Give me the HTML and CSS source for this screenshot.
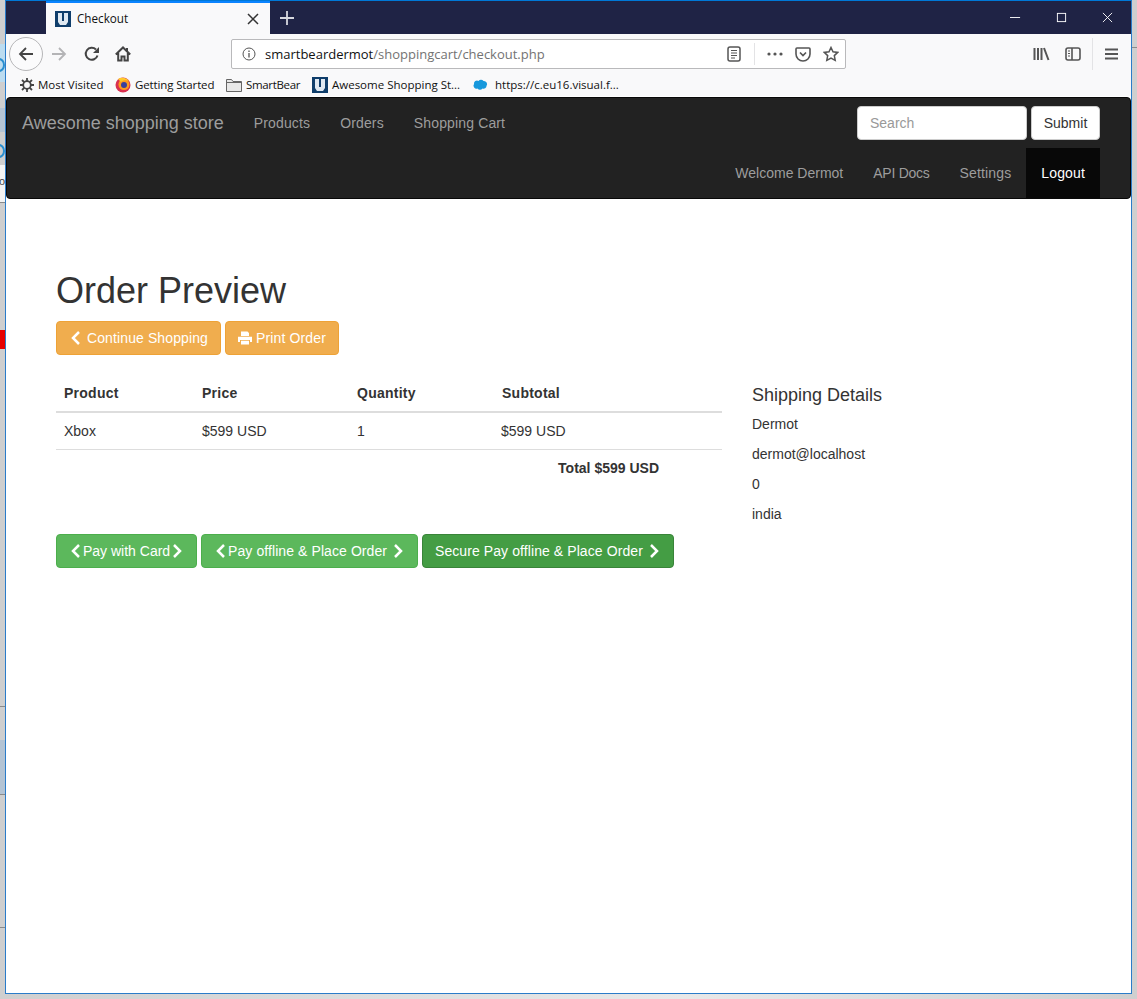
FILE: index.html
```html
<!DOCTYPE html>
<html lang="en">
<head>
  <meta charset="UTF-8" />
  <title>Checkout</title>
  <link rel="stylesheet" href="styles.css">
</head>
<body>
  <div class="desktop">
    <div class="strip strip-a"></div>
    <div class="strip strip-b"></div>
    <div class="strip strip-red"></div>
    <div class="strip strip-c"></div>
    <div class="strip strip-d"></div>
    <div class="strip-ring ring-a"></div>
    <div class="strip-ring ring-b"></div>
    <div class="strip-char">o</div>
    <div class="strip-line line-a"></div>
    <div class="strip-line line-b"></div>
    <div class="strip-line line-c"></div>
    <div class="strip-line line-d"></div>
    <div class="strip-line line-right"></div>
  </div>

  <div class="window">
    <div class="titlebar">
      <div class="tab">
        <svg class="favicon" viewBox="0 0 16 16"><rect width="16" height="16" fill="#0f3e6b"/><path d="M3 2h4v8h2V2h4v9l-2 3H5l-2-3z" fill="#dfe9f2"/></svg>
        <span class="tab-title">Checkout</span>
        <svg class="tab-close" viewBox="0 0 12 12"><path d="M1 1l10 10M11 1L1 11" stroke="#333" stroke-width="1.500" fill="none"/></svg>
      </div>
      <svg class="new-tab" viewBox="0 0 14 14"><path d="M7 0v14M0 7h14" stroke="#d6d7de" stroke-width="1.800" fill="none"/></svg>
      <div class="win-controls">
        <svg viewBox="0 0 12 12"><path d="M0 6h11" stroke="#fff" fill="none"/></svg>
        <svg viewBox="0 0 12 12"><rect x="1.500" y="1.500" width="9" height="9" stroke="#fff" fill="none"/></svg>
        <svg viewBox="0 0 12 12"><path d="M1 1l10 10M11 1L1 11" stroke="#fff" fill="none"/></svg>
      </div>
    </div>

    <div class="toolbar">
      <div class="back">
        <svg viewBox="0 0 16 16"><path d="M15 8H2M8 2L2 8l6 6" stroke="#444" stroke-width="1.800" fill="none"/></svg>
      </div>
      <svg class="tool forward" viewBox="0 0 16 16"><path d="M1 8h13M8 2l6 6-6 6" stroke="#b4b4b6" stroke-width="1.800" fill="none"/></svg>
      <svg class="tool reload" viewBox="0 0 16 16"><path d="M13.500 9.500A6 6 0 1 1 12 3.500" stroke="#444" stroke-width="2" fill="none"/><path d="M15 1v6H9z" fill="#444"/></svg>
      <svg class="tool home" viewBox="0 0 16 16"><path d="M.800 8.500L8 1.500l7.200 7M3.200 7v7.500h3.300v-4h3v4h3.300V7M12 2v3" stroke="#444" stroke-width="2" fill="none"/></svg>
      <div class="urlbar">
        <svg class="info" viewBox="0 0 14 14"><circle cx="7" cy="7" r="6" stroke="#555" fill="none"/><path d="M7 6v4.500M7 3.500v1.500" stroke="#555" stroke-width="1.300" fill="none"/></svg>
        <span class="url"><span class="url-host">smartbeardermot</span>/shoppingcart/checkout.php</span>
        <svg class="url-icon reader" viewBox="0 0 14 16"><rect x="1" y="1" width="12" height="14" rx="2" stroke="#555" stroke-width="1.500" fill="none"/><path d="M4 4.500h6M4 7h6M4 9.500h6M4 12h4" stroke="#555" fill="none"/></svg>
        <span class="url-sep"></span>
        <svg class="url-icon dots" viewBox="0 0 16 4"><circle cx="2" cy="2" r="1.600" fill="#555"/><circle cx="8" cy="2" r="1.600" fill="#555"/><circle cx="14" cy="2" r="1.600" fill="#555"/></svg>
        <svg class="url-icon pocket" viewBox="0 0 16 16"><path d="M2 2h12a1 1 0 0 1 1 1v5a7 7 0 0 1-14 0V3a1 1 0 0 1 1-1z" stroke="#555" stroke-width="1.600" fill="none"/><path d="M5 6.500l3 3 3-3" stroke="#555" stroke-width="1.700" fill="none"/></svg>
        <svg class="url-icon star" viewBox="0 0 16 16"><path d="M8 1.500l2 4.300 4.700.6-3.400 3.200.9 4.700L8 12l-4.200 2.300.9-4.700L1.300 6.400 6 5.800z" stroke="#555" stroke-width="1.500" fill="none"/></svg>
      </div>
      <svg class="tool library" viewBox="0 0 17 16"><path d="M1.500 2v12M5 2v12M8.500 2v12M11 2l4.500 12" stroke="#555" stroke-width="2" fill="none"/></svg>
      <svg class="tool sidebar" viewBox="0 0 16 16"><rect x="1" y="2" width="14" height="12" rx="2" stroke="#555" stroke-width="1.600" fill="none"/><path d="M7 2v12" stroke="#555" stroke-width="1.600"/><path d="M3 5h2M3 7.500h2M3 10h2" stroke="#555" fill="none"/></svg>
      <span class="tool-sep"></span>
      <svg class="tool menu" viewBox="0 0 13 12"><path d="M0 1.500h13M0 6h13M0 10.500h13" stroke="#555" stroke-width="1.800" fill="none"/></svg>
    </div>

    <div class="bookmarks">
      <span class="bookmark">
        <svg viewBox="0 0 14 14"><circle cx="7" cy="7" r="3.800" stroke="#444" stroke-width="1.800" fill="none"/><path d="M7 0v3M7 11v3M0 7h3M11 7h3M2 2l2.200 2.200M9.800 9.800L12 12M12 2L9.800 4.200M4.200 9.800L2 12" stroke="#444" stroke-width="1.800" fill="none"/></svg>
        Most Visited
      </span>
      <span class="bookmark">
        <svg class="wide" viewBox="0 0 16 16"><circle cx="8" cy="8" r="7.500" fill="#d9304f"/><circle cx="9" cy="7.500" r="5.500" fill="#ff9a1f"/><circle cx="9" cy="8" r="3" fill="#3a3f9e"/><path d="M3 2c3-2 8-2 11 2-3-1-6-1-8 1z" fill="#ffc92c"/></svg>
        Getting Started
      </span>
      <span class="bookmark">
        <svg class="wide" viewBox="0 0 16 14"><path d="M.5 13.500V1.500h5l1.500 2h8.500v10z" fill="#e8e8e8" stroke="#666"/><path d="M.5 4.500h15" stroke="#666"/></svg>
        SmartBear
      </span>
      <span class="bookmark">
        <svg class="wide" viewBox="0 0 16 16"><rect width="16" height="16" fill="#0f3e6b"/><path d="M3 2h4v8h2V2h4v9l-2 3H5l-2-3z" fill="#dfe9f2"/></svg>
        Awesome Shopping St...
      </span>
      <span class="bookmark">
        <svg class="wide cloud" viewBox="0 0 16 12"><path d="M6.500 2a3 3 0 0 1 5 0 3.200 3.200 0 0 1 3 5 2.800 2.800 0 0 1-4 2.500 3 3 0 0 1-5 0A3 3 0 0 1 2 5a3 3 0 0 1 4.500-3z" fill="#1798dc"/></svg>
        https://c.eu16.visual.f...
      </span>
    </div>

    <nav class="navbar">
      <div class="navbar-row">
        <div class="navbar-left">
          <a class="brand">Awesome shopping store</a>
          <a class="nav-link loose">Products</a>
          <a class="nav-link loose">Orders</a>
          <a class="nav-link loose">Shopping Cart</a>
        </div>
        <form class="search">
          <input class="search-input" type="text" placeholder="Search" />
          <button class="search-btn" type="button">Submit</button>
        </form>
      </div>
      <div class="navbar-row navbar-row-right">
        <a class="nav-link">Welcome Dermot</a>
        <a class="nav-link tight">API Docs</a>
        <a class="nav-link loose">Settings</a>
        <a class="nav-link loose active">Logout</a>
      </div>
    </nav>

    <main class="content">
      <h1>Order Preview</h1>
      <div class="actions">
        <a class="btn btn-warning"><svg class="glyph" viewBox="0 0 14 14"><path d="M10 1L4 7l6 6" /></svg> Continue Shopping</a>
        <a class="btn btn-warning"><svg class="glyph glyph-fill" viewBox="0 0 14 14"><path d="M3 .5h6.500L11 2v3H3zM0 5.800h14V11h-2V9H2v2H0zM3 9.800h8v3.700H3z" /></svg> Print Order</a>
      </div>

      <div class="order">
        <table class="cart">
          <colgroup>
            <col class="col-product"><col class="col-price"><col class="col-qty"><col>
          </colgroup>
          <thead>
            <tr><th>Product</th><th>Price</th><th>Quantity</th><th>Subtotal</th></tr>
          </thead>
          <tbody>
            <tr><td>Xbox</td><td>$599 USD</td><td>1</td><td>$599 USD</td></tr>
            <tr class="total-row"><td colspan="4"><strong>Total $599 USD</strong></td></tr>
          </tbody>
        </table>
        <div class="shipping">
          <h4>Shipping Details</h4>
          <p>Dermot</p>
          <p>dermot@localhost</p>
          <p>0</p>
          <p>india</p>
        </div>
      </div>

      <div class="pay">
        <a class="btn btn-success"><svg class="glyph" viewBox="0 0 14 14"><path d="M10 1L4 7l6 6" /></svg>Pay with Card<svg class="glyph" viewBox="0 0 14 14"><path d="M4 1l6 6-6 6" /></svg></a>
        <a class="btn btn-success btn-wide"><svg class="glyph" viewBox="0 0 14 14"><path d="M10 1L4 7l6 6" /></svg>Pay offline &amp; Place Order <svg class="glyph" viewBox="0 0 14 14"><path d="M4 1l6 6-6 6" /></svg></a>
        <a class="btn btn-success btn-wide btn-dark">Secure Pay offline &amp; Place Order <svg class="glyph" viewBox="0 0 14 14"><path d="M4 1l6 6-6 6" /></svg></a>
      </div>
    </main>
  </div>
</body>
</html>
```

FILE: styles.css
```css
* {
  box-sizing: border-box;
}
body {
  margin: 0;
  height: 999px;
  overflow: hidden;
  position: relative;
  background: linear-gradient(90deg, #cfcfcf, #e8e8e8 60%, #cfcfcf);
  font-family: "Liberation Sans", Arial, sans-serif;
  font-size: 14px;
  line-height: 20px;
  color: #333;
}

/* bits of other windows showing round the browser */
.desktop .strip, .desktop .strip-line {
  position: absolute;
  left: 0;
  width: 5px;
}
.strip-a { top: 44px; height: 38px; background: #bcdcf0; }
.strip-b { top: 108px; height: 24px; background: #b4c4d4; }
.strip-red { top: 330px; height: 19px; background: #e60000; }
.strip-c { top: 740px; height: 55px; background: #b4c4d4; }
.strip-d { top: 165px; height: 37px; background: #f4f4f4; }
.strip-line { height: 1px; background: #8a8a8a; }
.line-a { top: 706px; }
.line-b { top: 794px; }
.line-c { top: 927px; }
.line-d { top: 202px; }
.desktop .line-right { left: 1132px; top: 47px; }
.strip-ring {
  position: absolute;
  left: -7px;
  width: 12px;
  height: 14px;
  border: 2px solid #2a8fd0;
  border-radius: 50%;
}
.ring-a { top: 58px; }
.ring-b { top: 144px; }
.strip-char {
  position: absolute;
  left: -1px;
  top: 171px;
  font-size: 11px;
  color: #444;
}

.window {
  position: relative;
  margin-left: 5px;
  width: 1127px;
  height: 994px;
  background: #fff;
  border: 1px solid #2b7cc9;
  border-top-color: #0078d7;
  display: flex;
  flex-direction: column;
}

/* browser chrome */
.titlebar {
  height: 33px;
  background: #1f2345;
  display: flex;
  align-items: center;
  padding-left: 40px;
  flex-shrink: 0;
}
.tab {
  width: 224px;
  height: 33px;
  background: #f9f9fa;
  border-top: 2px solid #0a84ff;
  display: flex;
  align-items: center;
  padding: 0 11px 0 9px;
  font-family: "Open Sans", sans-serif;
  font-size: 11.700px;
  color: #111;
}
.favicon {
  width: 16px;
  height: 16px;
}
.tab-title {
  margin-left: 6px;
  padding-bottom: 2px;
  flex: 1;
}
.tab-close {
  width: 12px;
  height: 12px;
}
.new-tab {
  width: 14px;
  height: 14px;
  margin-left: 10px;
}
.win-controls {
  margin-left: auto;
  display: flex;
  gap: 35px;
  padding-right: 18px;
}
.win-controls svg {
  width: 11px;
  height: 11px;
}

.toolbar {
  height: 36px;
  background: #f9f9fa;
  display: flex;
  align-items: center;
  flex-shrink: 0;
  font-family: "Open Sans", sans-serif;
}
.back {
  width: 34px;
  height: 34px;
  margin: 4px 0 0 3px;
  border: 1px solid #b6b6b8;
  border-radius: 50%;
  background: #fbfbfc;
  display: flex;
  align-items: center;
  justify-content: center;
  position: relative;
  z-index: 1;
}
.back svg {
  width: 16px;
  height: 16px;
}
.tool {
  width: 16px;
  height: 16px;
  margin-top: 4px;
  flex-shrink: 0;
}
.forward { margin-left: 8px; }
.reload { margin-left: 17px; }
.home { margin-left: 15px; }
.urlbar {
  width: 615px;
  height: 30px;
  margin: 4px 0 0 100px;
  background: #fff;
  border: 1px solid #b9b9bb;
  border-radius: 2px;
  display: flex;
  align-items: center;
  padding-left: 10px;
}
.info {
  width: 14px;
  height: 14px;
}
.url {
  margin-left: 9px;
  font-size: 13px;
  color: #737373;
  flex: 1;
  white-space: nowrap;
}
.url-host {
  color: #111;
}
.url-icon {
  flex-shrink: 0;
}
.reader {
  width: 14px;
  height: 16px;
}
.url-sep {
  width: 1px;
  height: 22px;
  background: #e3e3e5;
  margin: 0 12px 0 13px;
}
.dots {
  width: 16px;
  height: 4px;
}
.pocket {
  width: 16px;
  height: 16px;
  margin-left: 12px;
}
.star {
  width: 16px;
  height: 16px;
  margin: 0 6px 0 12px;
}
.library {
  width: 17px;
  margin-left: 187px;
}
.sidebar {
  margin-left: 15px;
}
.tool-sep {
  width: 1px;
  height: 32px;
  background: #e3e3e5;
  margin: 4px 0 0 11px;
}
.menu {
  width: 13px;
  height: 12px;
  margin-left: 12px;
}

.bookmarks {
  height: 26px;
  background: #f9f9fa;
  display: flex;
  align-items: center;
  padding: 4px 0 0 14px;
  flex-shrink: 0;
  font-family: "Open Sans", sans-serif;
  font-size: 11.500px;
  color: #111;
}
.bookmark {
  display: flex;
  align-items: center;
  gap: 4px;
  white-space: nowrap;
}
.bookmark:nth-child(1) { width: 95px; }
.bookmark:nth-child(2) { width: 111px; letter-spacing: -.13px; }
.bookmark:nth-child(3) { width: 86px; letter-spacing: -.33px; }
.bookmark:nth-child(4) { width: 160px; }
.bookmark svg {
  width: 14px;
  height: 14px;
}
.bookmark svg.wide {
  width: 16px;
  height: 16px;
}
.bookmark svg.cloud {
  margin-right: 3px;
}

/* site navbar */
.navbar {
  margin-top: 1px;
  height: 102px;
  flex-shrink: 0;
  background: #222;
  border: 1px solid #080808;
  border-radius: 4px;
  padding: 0 30px 0 15px;
}
.navbar-row {
  height: 50px;
  display: flex;
  justify-content: space-between;
}
.navbar-row-right {
  justify-content: flex-end;
}
.navbar-left {
  display: flex;
}
.brand {
  font-size: 18px;
  line-height: 50px;
  color: #9d9d9d;
  padding-right: 15px;
}
.nav-link {
  color: #9d9d9d;
  padding: 15px;
}
.nav-link.loose {
  letter-spacing: .14px;
}
.nav-link.tight {
  letter-spacing: -.25px;
}
.nav-link.active {
  background: #080808;
  color: #fff;
}
.search {
  display: flex;
  gap: 4px;
  margin: 8px 0 0;
}
.search-input {
  width: 170px;
  height: 34px;
  padding: 6px 12px;
  font: inherit;
  color: #555;
  background: #fff;
  border: 1px solid #ccc;
  border-radius: 4px;
}
.search-input::placeholder {
  color: #999;
}
.search-btn {
  width: 69px;
  height: 34px;
  padding: 6px 0;
  font: inherit;
  color: #333;
  background: #fff;
  border: 1px solid #ccc;
  border-radius: 4px;
}

/* page */
.content {
  padding: 0 50px;
}
h1 {
  margin: 72px 0 10px;
  font-size: 36px;
  font-weight: 500;
  line-height: 39.600px;
}
.btn {
  display: inline-block;
  padding: 6px 12px;
  border: 1px solid transparent;
  border-radius: 4px;
  color: #fff;
  white-space: nowrap;
}
.btn-warning {
  background: #f0ad4e;
  border-color: #eea236;
  letter-spacing: .11px;
}
.btn-warning + .btn-warning {
  letter-spacing: .15px;
}
.btn-success {
  background: #5cb85c;
  border-color: #4cae4c;
}
.btn-wide {
  letter-spacing: .085px;
}
.btn-dark {
  background: #449d44;
  border-color: #398439;
}
.glyph {
  width: 14px;
  height: 14px;
  vertical-align: -2px;
  fill: none;
  stroke: #fff;
  stroke-width: 2.500;
}
.glyph-fill {
  fill: #fff;
  stroke: none;
}

.order {
  display: flex;
  gap: 30px;
  margin-top: 20px;
}
.cart {
  width: 666px;
  flex-shrink: 0;
  border-collapse: collapse;
  table-layout: fixed;
  align-self: flex-start;
}
.col-product { width: 138px; }
.col-price { width: 155px; }
.col-qty { width: 144px; }
.cart th {
  padding: 8px;
  text-align: left;
  letter-spacing: .25px;
  border-bottom: 2px solid #ddd;
}
.cart th:last-child {
  padding-left: 9px;
}
.cart td {
  padding: 8px;
  border-bottom: 1px solid #ddd;
}
.total-row td {
  border-bottom: none;
  text-align: right;
  padding-right: 63px;
}
.shipping h4 {
  margin: 10px 0 9px;
  font-size: 18px;
  font-weight: 500;
  line-height: 20px;
}
.shipping p {
  margin: 0 0 10px;
}
```
